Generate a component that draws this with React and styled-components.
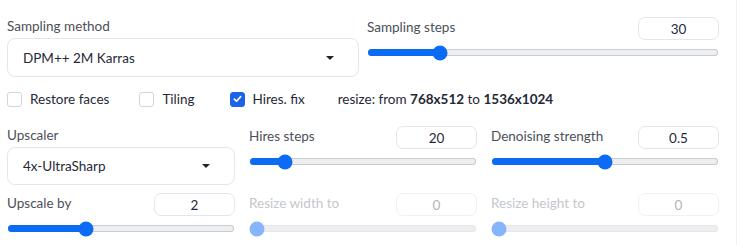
import React from 'react';
import styled, { createGlobalStyle } from 'styled-components';

const GlobalStyle = createGlobalStyle`
  html, body {
    margin: 0;
    padding: 0;
    background: #ffffff;
  }
  body {
    font-family: Lato, "Noto Sans", sans-serif;
    color: #1f2937;
    -webkit-font-smoothing: antialiased;
  }
`;

const Page = styled.div`
  width: 737px;
  border-right: 1px solid #f0f0f2;
  padding: 17px 17px 40px 7px;
  box-sizing: border-box;
  display: flex;
  flex-direction: column;
`;

const TopRow = styled.div`
  display: flex;
  gap: 8px;
`;

const Column = styled.div`
  flex: 1;
  min-width: 0;
  display: flex;
  flex-direction: column;
`;

const Label = styled.span`
  font-size: 13.5px;
  line-height: 18px;
  padding-bottom: 4px;
  color: ${p => (p.$disabled ? '#c4c7cc' : '#4b5058')};
  white-space: nowrap;
`;

const DropLabel = styled(Label)`
  display: block;
  padding-bottom: 0;
  margin-bottom: 3px;
`;

const Dropdown = styled.div`
  height: ${p => p.$h || 38}px;
  border: 1px solid #e4e6ea;
  border-radius: 8px;
  box-sizing: border-box;
  display: flex;
  align-items: center;
  justify-content: space-between;
  padding: 0 24px 0 15px;
  font-size: 13.5px;
  color: #1f2937;
  background: #fff;
`;

const Caret = styled.span`
  width: 0;
  height: 0;
  border-left: 4px solid transparent;
  border-right: 4px solid transparent;
  border-top: 4px solid #222;
`;

const SliderWrap = styled.div`
  display: flex;
  flex-direction: column;
`;

const SliderHead = styled.div`
  display: flex;
  justify-content: space-between;
  align-items: center;
  height: 23px;
`;

const NumberBox = styled.div`
  width: 81px;
  height: 23px;
  box-sizing: border-box;
  border: 1px solid ${p => (p.$disabled ? '#f0f1f3' : '#e4e6ea')};
  border-radius: 7px;
  display: flex;
  align-items: center;
  justify-content: center;
  font-size: 13.5px;
  color: ${p => (p.$disabled ? '#b0b4ba' : '#1f2937')};
`;

const Track = styled.div`
  position: relative;
  height: 7px;
  margin: 9px 1px 5px 1px;
  border-radius: 4px;
  background: #eceef0;
  box-shadow: inset 0 0 0 1px ${p => (p.$disabled ? '#e6e7ea' : '#c9ccd0')};
`;

const Fill = styled.div`
  height: 100%;
  border-radius: 4px;
  background: #0b6bf2;
`;

const Thumb = styled.div`
  position: absolute;
  top: 50%;
  width: 15px;
  height: 15px;
  border-radius: 50%;
  transform: translate(-50%, -50%);
  background: ${p => (p.$disabled ? '#86b5fb' : '#0b6bf2')};
`;

const CheckRow = styled.div`
  display: flex;
  align-items: center;
  height: 24px;
  margin: 10px 0 15px;
`;

const CheckItem = styled.label`
  display: flex;
  align-items: center;
  gap: 8px;
  margin-right: ${p => p.$gap}px;
  font-size: 13.5px;
  color: #1f2937;
`;

const Box = styled.span`
  width: 15px;
  height: 15px;
  box-sizing: border-box;
  border-radius: 3px;
  border: 1px solid ${p => (p.$checked ? '#1d63e8' : '#d2d5da')};
  background: ${p => (p.$checked ? '#1d63e8' : '#fff')};
  display: flex;
  align-items: center;
  justify-content: center;
`;

const ResizeNote = styled.span`
  font-size: 13.5px;
  color: #1f2937;
  b {
    font-weight: 700;
  }
`;

const Grid = styled.div`
  display: grid;
  grid-template-columns: repeat(3, 1fr);
  column-gap: 14px;
  row-gap: 8px;
  align-items: start;
`;

function Slider({ label, value, pct, disabled }) {
  return (
    <SliderWrap>
      <SliderHead>
        <Label $disabled={disabled}>{label}</Label>
        <NumberBox $disabled={disabled}>{value}</NumberBox>
      </SliderHead>
      <Track $disabled={disabled}>
        {!disabled && <Fill style={{ width: `${pct}%` }} />}
        <Thumb $disabled={disabled} style={{ left: `${Math.max(pct, 3)}%` }} />
      </Track>
    </SliderWrap>
  );
}

function Check({ label, checked, gap }) {
  return (
    <CheckItem $gap={gap}>
      <Box $checked={checked}>
        {checked && (
          <svg width="9" height="8" viewBox="0 0 9 8">
            <path d="M1.3 4.2 L3.5 6.2 L7.7 1.6" fill="none" stroke="#fff" strokeWidth="1.6" strokeLinecap="round" strokeLinejoin="round" />
          </svg>
        )}
      </Box>
      {label}
    </CheckItem>
  );
}

export default function App() {
  return (
    <>
      <GlobalStyle />
      <Page>
        <TopRow>
          <Column>
            <DropLabel>Sampling method</DropLabel>
            <Dropdown $h={39}>
              DPM++ 2M Karras
              <Caret />
            </Dropdown>
          </Column>
          <Column>
            <Slider label="Sampling steps" value="30" pct={20.5} />
          </Column>
        </TopRow>
        <CheckRow>
          <Check label="Restore faces" gap={30} />
          <Check label="Tiling" gap={35} />
          <Check label="Hires. fix" gap={33} checked />
          <ResizeNote>
            resize: from <b>768x512</b> to <b>1536x1024</b>
          </ResizeNote>
        </CheckRow>
        <Grid>
          <Column>
            <DropLabel>Upscaler</DropLabel>
            <Dropdown $h={38}>
              4x-UltraSharp
              <Caret />
            </Dropdown>
          </Column>
          <Slider label="Hires steps" value="20" pct={15.5} />
          <Slider label="Denoising strength" value="0.5" pct={50} />
          <Slider label="Upscale by" value="2" pct={34.5} />
          <Slider label="Resize width to" value="0" pct={0} disabled />
          <Slider label="Resize height to" value="0" pct={0} disabled />
          <div />
          <Slider label="" value="" pct={23} />
          <Slider label="" value="" pct={12} />
        </Grid>
      </Page>
    </>
  );
}
